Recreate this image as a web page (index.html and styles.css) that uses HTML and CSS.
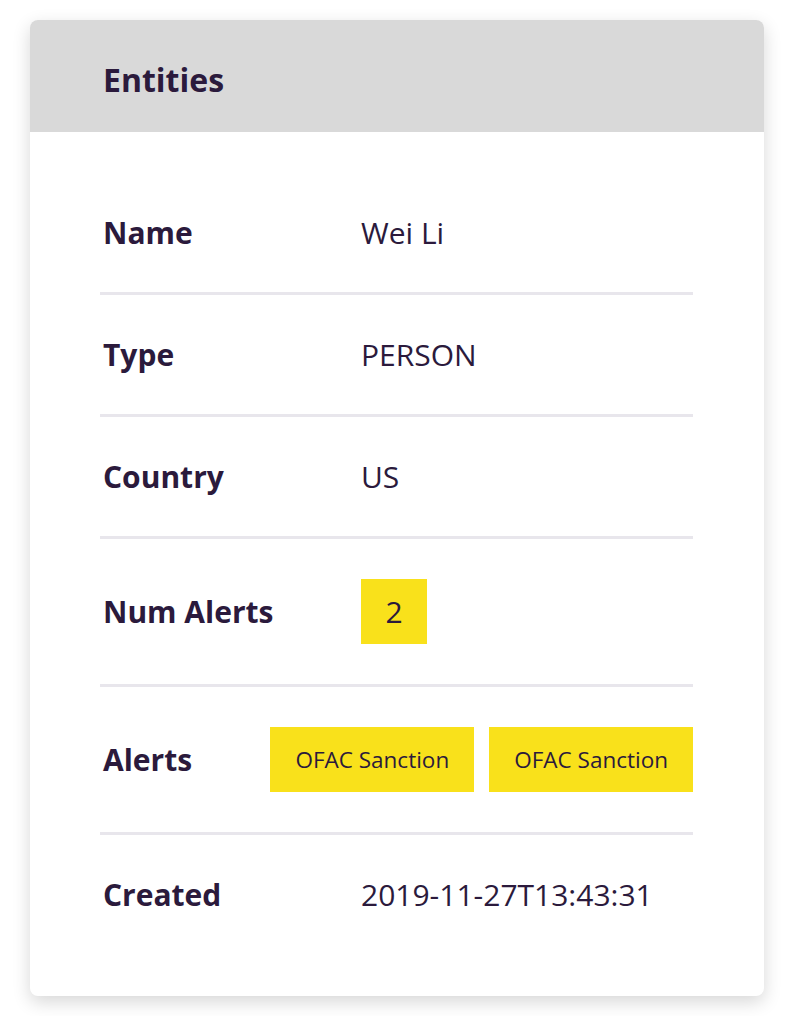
FILE: index.html
```html
<!doctype html>
<html lang="en">

<head>
    <meta charset="UTF-8" />
    <meta name="viewport" content="width=device-width, initial-scale=1.0" />
    <title>Entities</title>
    <link rel="stylesheet" href="styles.css">
</head>

<body>
    <div class="card">
        <header class="card-header">
            <h1>Entities</h1>
        </header>

        <div class="card-body">
            <div class="row">
                <div class="label">Name</div>
                <div class="value">Wei Li</div>
            </div>
            <div class="row">
                <div class="label">Type</div>
                <div class="value">PERSON</div>
            </div>
            <div class="row">
                <div class="label">Country</div>
                <div class="value">US</div>
            </div>
            <div class="row">
                <div class="label">Num Alerts</div>
                <div class="value">
                    <span class="badge badge-count">2</span>
                </div>
            </div>
            <div class="row">
                <div class="label">Alerts</div>
                <div class="value badges">
                    <span class="badge">OFAC Sanction</span>
                    <span class="badge">OFAC Sanction</span>
                </div>
            </div>
            <div class="row">
                <div class="label">Created</div>
                <div class="value">2019-11-27T13:43:31</div>
            </div>
        </div>
    </div>
</body>

</html>
```

FILE: styles.css
```css
:root {
    --text-color: #2b1a3c;
    --header-bg: #d9d9d9;
    --divider: #e8e6ec;
    --badge-bg: #f9e11b;
}

* {
    margin: 0;
    padding: 0;
    box-sizing: border-box;
    font-family: "Open Sans", "Noto Sans", sans-serif;
}

body {
    background-color: white;
    color: var(--text-color);
    padding: 20px 30px;
}

.card {
    width: 734px;
    background-color: white;
    border-radius: 8px;
    overflow: hidden;
    box-shadow: 0 6px 18px rgba(0, 0, 0, 0.16);
}

.card-header {
    background-color: var(--header-bg);
    height: 112px;
    display: flex;
    align-items: center;
    padding-left: 73px;
}

.card-header h1 {
    font-size: 32px;
    font-weight: 700;
    padding-top: 6px;
}

.card-body {
    padding: 41px 71px 42px 70px;
}

.row {
    display: flex;
    align-items: center;
    padding: 40px 0;
    border-bottom: 3px solid var(--divider);
}

.row:last-child {
    border-bottom: none;
}

.label {
    flex: 1;
    padding-left: 3px;
    font-size: 30px;
    font-weight: 700;
    line-height: 39px;
}

.value {
    min-width: 332px;
    font-size: 30px;
    line-height: 39px;
}

.badges {
    display: flex;
    gap: 15px;
}

.badge {
    display: block;
    background-color: var(--badge-bg);
    height: 65px;
    line-height: 65px;
    padding: 0 25px;
    font-size: 22.5px;
}

.badge-count {
    width: 66px;
    padding: 0;
    text-align: center;
    font-size: 30px;
}
```
